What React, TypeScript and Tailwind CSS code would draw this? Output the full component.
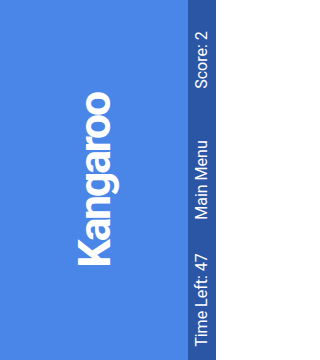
import * as React from "react";

const SideItem = ({ label }: { label: string }) => (
  <div className="flex-1 flex items-center justify-center">
    <span className="-rotate-90 whitespace-nowrap text-white text-[16px] leading-none">
      {label}
    </span>
  </div>
);

const App = () => {
  return (
    <div className="w-[216px] h-[360px] flex overflow-hidden font-['Roboto',_'Liberation_Sans',_sans-serif]">
      <div className="flex-1 bg-[#4a86e8] flex items-center justify-center">
        <span className="-rotate-90 whitespace-nowrap text-white font-bold text-[45px] leading-none tracking-[-2.5px]">
          Kangaroo
        </span>
      </div>
      <div className="w-[28px] bg-[#2b55a5] flex flex-col">
        <SideItem label="Score: 2" />
        <SideItem label="Main Menu" />
        <SideItem label="Time Left: 47" />
      </div>
    </div>
  );
};

export default App;
